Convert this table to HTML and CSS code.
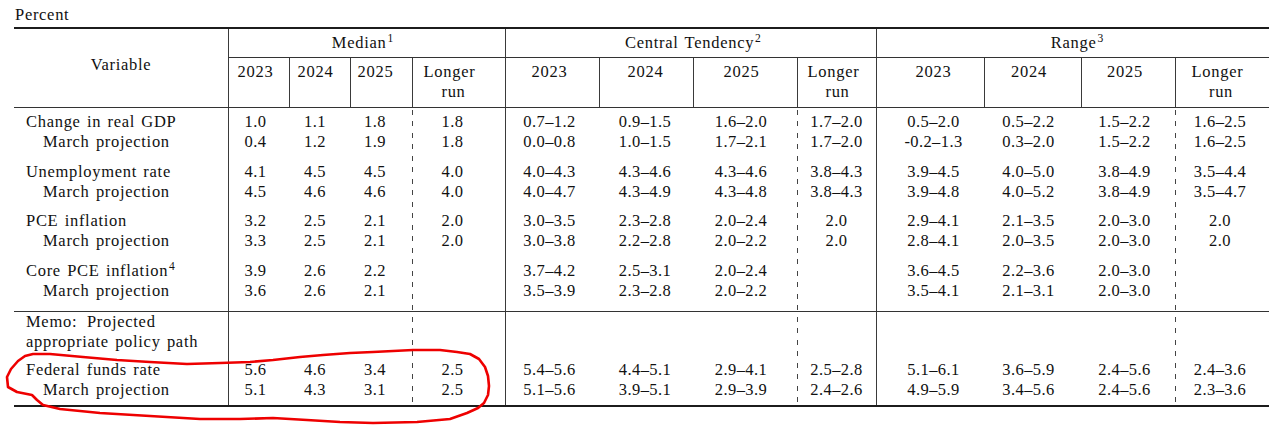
FILE: index.html
```html
<!DOCTYPE html>
<html lang="en">
<head>
<meta charset="utf-8">
<title>Economic projections</title>
<link rel="stylesheet" href="styles.css">
</head>
<body>
<div class="page">
  <div class="unit">Percent</div>
  <div class="tbl">
    <div class="thead">
      <div class="var">Variable</div>
      <div class="grp g-med">Median<sup>1</sup></div>
      <div class="grp g-ct">Central Tendency<sup>2</sup></div>
      <div class="grp g-rng">Range<sup>3</sup></div>
      <div class="hrow">
        <div>2023</div><div>2024</div><div>2025</div>
        <div class="lr"><span>Longer</span><span>run</span></div>
        <div>2023</div><div>2024</div><div>2025</div>
        <div class="lr"><span>Longer</span><span>run</span></div>
        <div>2023</div><div>2024</div><div>2025</div>
        <div class="lr"><span>Longer</span><span>run</span></div>
      </div>
    </div>
    <div class="tbody">
      <div class="row gs-a">
        <div>Change in real GDP</div>
        <div>1.0</div><div>1.1</div><div>1.8</div><div>1.8</div>
        <div>0.7–1.2</div><div>0.9–1.5</div><div>1.6–2.0</div><div>1.7–2.0</div>
        <div>0.5–2.0</div><div>0.5–2.2</div><div>1.5–2.2</div><div>1.6–2.5</div>
      </div>
      <div class="row">
        <div class="sub">March projection</div>
        <div>0.4</div><div>1.2</div><div>1.9</div><div>1.8</div>
        <div>0.0–0.8</div><div>1.0–1.5</div><div>1.7–2.1</div><div>1.7–2.0</div>
        <div>-0.2–1.3</div><div>0.3–2.0</div><div>1.5–2.2</div><div>1.6–2.5</div>
      </div>
      <div class="row gs-b">
        <div>Unemployment rate</div>
        <div>4.1</div><div>4.5</div><div>4.5</div><div>4.0</div>
        <div>4.0–4.3</div><div>4.3–4.6</div><div>4.3–4.6</div><div>3.8–4.3</div>
        <div>3.9–4.5</div><div>4.0–5.0</div><div>3.8–4.9</div><div>3.5–4.4</div>
      </div>
      <div class="row">
        <div class="sub">March projection</div>
        <div>4.5</div><div>4.6</div><div>4.6</div><div>4.0</div>
        <div>4.0–4.7</div><div>4.3–4.9</div><div>4.3–4.8</div><div>3.8–4.3</div>
        <div>3.9–4.8</div><div>4.0–5.2</div><div>3.8–4.9</div><div>3.5–4.7</div>
      </div>
      <div class="row gs-c">
        <div>PCE inflation</div>
        <div>3.2</div><div>2.5</div><div>2.1</div><div>2.0</div>
        <div>3.0–3.5</div><div>2.3–2.8</div><div>2.0–2.4</div><div>2.0</div>
        <div>2.9–4.1</div><div>2.1–3.5</div><div>2.0–3.0</div><div>2.0</div>
      </div>
      <div class="row">
        <div class="sub">March projection</div>
        <div>3.3</div><div>2.5</div><div>2.1</div><div>2.0</div>
        <div>3.0–3.8</div><div>2.2–2.8</div><div>2.0–2.2</div><div>2.0</div>
        <div>2.8–4.1</div><div>2.0–3.5</div><div>2.0–3.0</div><div>2.0</div>
      </div>
      <div class="row gs-b">
        <div>Core PCE inflation<sup>4</sup></div>
        <div>3.9</div><div>2.6</div><div>2.2</div><div></div>
        <div>3.7–4.2</div><div>2.5–3.1</div><div>2.0–2.4</div><div></div>
        <div>3.6–4.5</div><div>2.2–3.6</div><div>2.0–3.0</div><div></div>
      </div>
      <div class="row sec-end">
        <div class="sub">March projection</div>
        <div>3.6</div><div>2.6</div><div>2.1</div><div></div>
        <div>3.5–3.9</div><div>2.3–2.8</div><div>2.0–2.2</div><div></div>
        <div>3.5–4.1</div><div>2.1–3.1</div><div>2.0–3.0</div><div></div>
      </div>
      <div class="row">
        <div class="memo">Memo: Projected</div>
        <div></div><div></div><div></div><div></div>
        <div></div><div></div><div></div><div></div>
        <div></div><div></div><div></div><div></div>
      </div>
      <div class="row">
        <div>appropriate policy path</div>
        <div></div><div></div><div></div><div></div>
        <div></div><div></div><div></div><div></div>
        <div></div><div></div><div></div><div></div>
      </div>
      <div class="row gs-c">
        <div>Federal funds rate</div>
        <div>5.6</div><div>4.6</div><div>3.4</div><div>2.5</div>
        <div>5.4–5.6</div><div>4.4–5.1</div><div>2.9–4.1</div><div>2.5–2.8</div>
        <div>5.1–6.1</div><div>3.6–5.9</div><div>2.4–5.6</div><div>2.4–3.6</div>
      </div>
      <div class="row last">
        <div class="sub">March projection</div>
        <div>5.1</div><div>4.3</div><div>3.1</div><div>2.5</div>
        <div>5.1–5.6</div><div>3.9–5.1</div><div>2.9–3.9</div><div>2.4–2.6</div>
        <div>4.9–5.9</div><div>3.4–5.6</div><div>2.4–5.6</div><div>2.3–3.6</div>
      </div>
    </div>
  </div>
  <svg class="mark" width="1281" height="427" viewBox="0 0 1281 427" aria-hidden="true">
    <path d="M33 354 L50 354 L83 357 L117 360 L150 362 L187 364 L220 363 L250 362 L273 360 L300 357 L323 355 L350 353 L373 352 L413 350 L440 350 L457 352 L470 354 L479 359 L485 367 L488 376 L489 386 L488 395 L484 403 L478 408 L467 413 L450 419 L417 422 L373 423 L340 422 L307 420 L273 418 L240 419 L200 419 L150 416 L100 413 L60 409 L43 405 L37 400 L32 395 L17 392 L8 387 L7 377 L11 369 L18 361 L25 356 Z" fill="none" stroke="#ee0000" stroke-width="2.6" stroke-linejoin="round" stroke-linecap="round"/>
  </svg>
</div>
</body>
</html>
```

FILE: styles.css
```css
html, body {
  margin: 0;
  padding: 0;
  background: #ffffff;
}

body {
  font-family: "Liberation Serif", "Times New Roman", serif;
  font-size: 16.5px;
  color: #111111;
  letter-spacing: 0.7px;
  word-spacing: 1.5px;
}

.page {
  position: relative;
  width: 1281px;
  height: 427px;
  padding: 5px 0 0 14px;
  box-sizing: border-box;
}

.unit {
  line-height: 20px;
  padding-left: 1px;
  margin-bottom: 2px;
}

.tbl {
  width: 1255px;
  border-top: 2px solid #1c1c1c;
  border-bottom: 2px solid #1c1c1c;
}

.thead,
.tbody {
  display: grid;
  grid-template-columns: 214px 61px 61px 62px 93px 94px 94px 104px 79px 108px 97px 94px 94px;
}

.thead > div,
.tbody div {
  box-sizing: border-box;
}

sup {
  font-size: 0.7em;
  line-height: 0;
  vertical-align: 0.5em;
  letter-spacing: 0;
  margin-left: 1px;
}

/* ---------- header ---------- */
.var {
  grid-row: 1 / span 2;
  grid-column: 1;
  text-align: center;
  line-height: 20px;
  padding-top: 25.7px;
  border-bottom: 1px solid #333;
}

.grp {
  grid-row: 1;
  text-align: center;
  line-height: 20px;
  padding-top: 4px;
  padding-bottom: 4px;
  border-left: 1px solid #3a3a3a;
  border-bottom: 1px solid #333;
}

.g-med { grid-column: 2 / span 4; padding-right: 9px; }
.g-ct { grid-column: 6 / span 4; padding-left: 4px; }
.g-rng { grid-column: 10 / span 4; padding-left: 8px; }

.hrow { display: contents; }

.hrow > div {
  text-align: center;
  line-height: 20px;
  padding-top: 3.5px;
  padding-bottom: 5.5px;
  border-left: 1px solid #3a3a3a;
  border-bottom: 1px solid #333;
}

.lr span { display: block; }

.hrow > div:nth-child(1) { padding-right: 7px; }
.hrow > div:nth-child(2) { padding-right: 9px; }
.hrow > div:nth-child(3) { padding-right: 12px; }
.hrow > div:nth-child(4) { padding-right: 11px; }
.hrow > div:nth-child(4) span:first-child { padding-right: 8px; }
.hrow > div:nth-child(5) { padding-right: 6px; }
.hrow > div:nth-child(6) { padding-right: 2px; }
.hrow > div:nth-child(7) { padding-right: 8px; }
.hrow > div:nth-child(8) { padding-left: 1px; }
.hrow > div:nth-child(8) span:first-child { padding-right: 8px; }
.hrow > div:nth-child(9) { padding-left: 6px; }
.hrow > div:nth-child(10) { padding-right: 8px; }
.hrow > div:nth-child(11) { padding-right: 7px; }
.hrow > div:nth-child(12) { padding-right: 3px; }
.hrow > div:nth-child(12) span:first-child { padding-right: 7px; }

/* ---------- body ---------- */
.tbody {
  background-image:
    repeating-linear-gradient(to bottom, #444 0 5px, transparent 5px 11.5px),
    repeating-linear-gradient(to bottom, #444 0 5px, transparent 5px 11.5px),
    repeating-linear-gradient(to bottom, #444 0 5px, transparent 5px 11.5px);
  background-size: 1px 100%, 1px 100%, 1px 100%;
  background-position: 398px 2px, 783px 2px, 1161px 2px;
  background-repeat: no-repeat;
}

.row { display: contents; }

.row > div {
  line-height: 20px;
  text-align: center;
  white-space: nowrap;
  letter-spacing: 0.4px;
}

.row > div:first-child {
  text-align: left;
  padding-left: 12px;
  letter-spacing: 0.7px;
}

.row > div.sub { padding-left: 29px; }
.row > div.memo { word-spacing: 5px; }

.row > div:nth-child(2) { padding-right: 7px; border-left: 1px solid #3a3a3a; }
.row > div:nth-child(3) { padding-right: 9px; }
.row > div:nth-child(4) { padding-right: 12px; }
.row > div:nth-child(5) { padding-right: 12px; }
.row > div:nth-child(6) { padding-right: 6px; border-left: 1px solid #3a3a3a; }
.row > div:nth-child(7) { padding-right: 2px; }
.row > div:nth-child(8) { padding-right: 8px; }
.row > div:nth-child(9) { padding-left: 0; }
.row > div:nth-child(10) { padding-left: 6px; border-left: 1px solid #3a3a3a; }
.row > div:nth-child(11) { padding-right: 8px; }
.row > div:nth-child(12) { padding-right: 7px; }
.row > div:nth-child(13) { padding-right: 4px; }

.row.gs-a > div { padding-top: 4px; }
.row.gs-b > div { padding-top: 10px; }
.row.gs-c > div { padding-top: 8.5px; }

.row.sec-end > div {
  padding-bottom: 10px;
  border-bottom: 1px solid #333;
}

.row.last > div { padding-bottom: 5px; }

/* ---------- hand-drawn annotation ---------- */
.mark {
  position: absolute;
  left: 0;
  top: 0;
  pointer-events: none;
}
```
